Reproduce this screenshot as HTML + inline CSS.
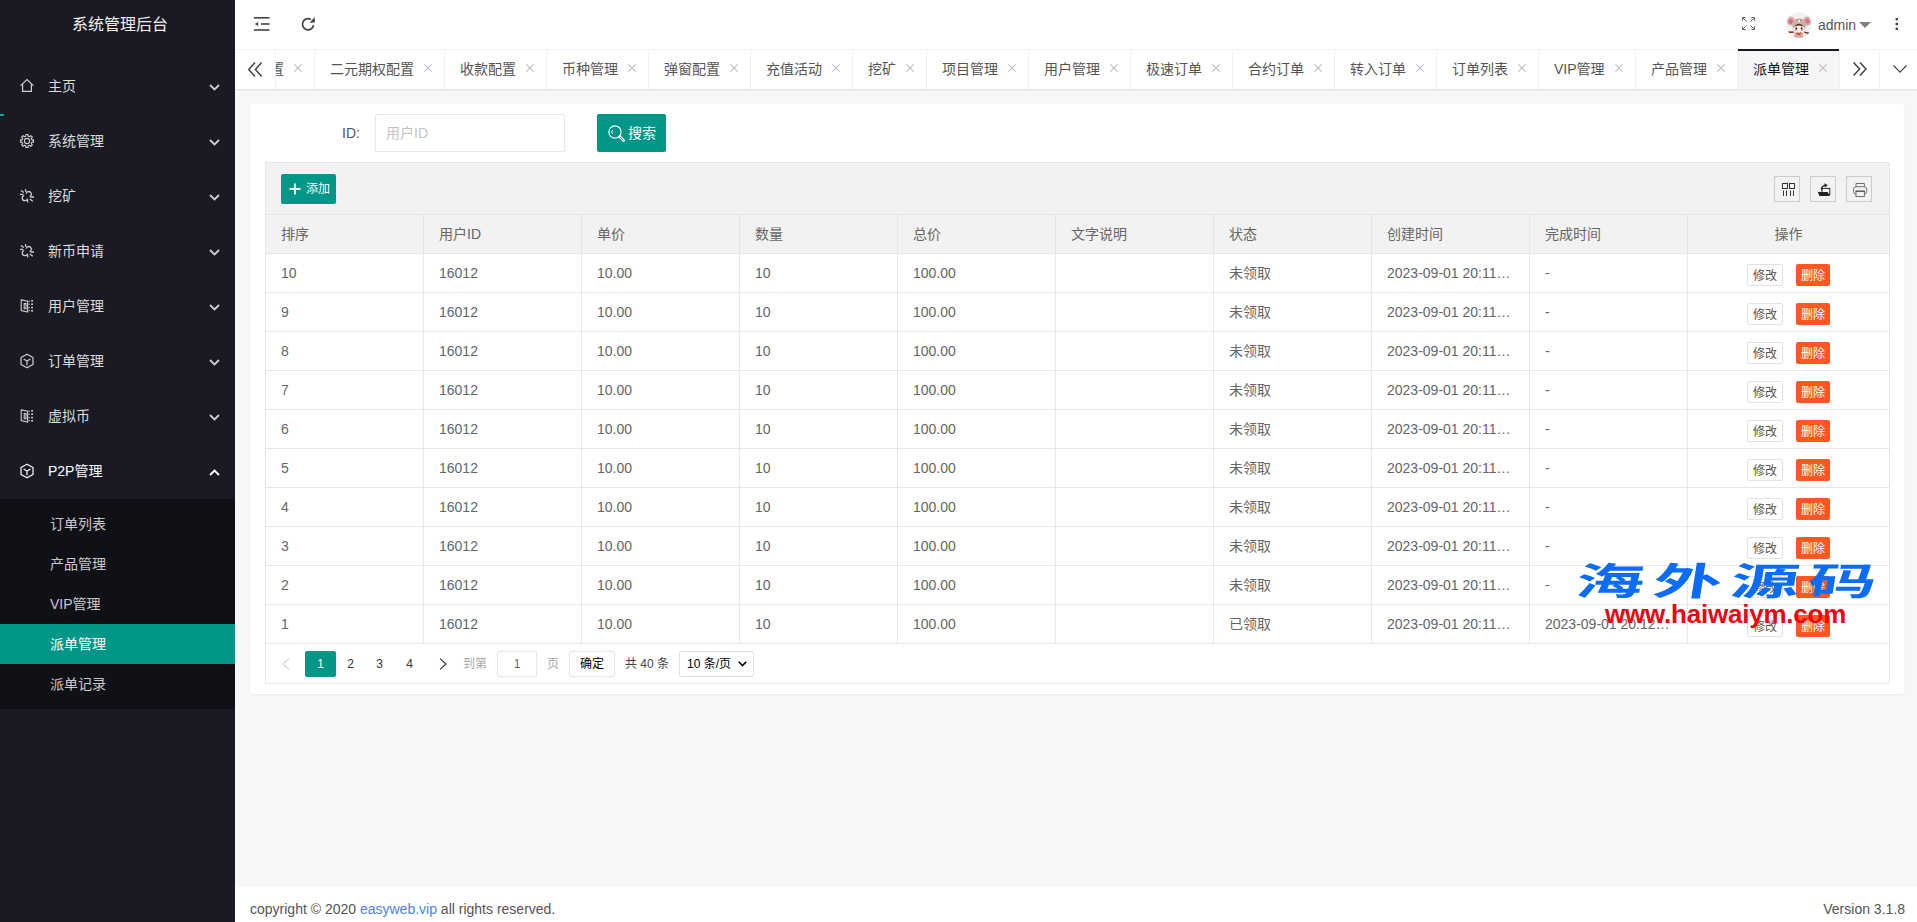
<!DOCTYPE html>
<html lang="zh-CN">
<head>
<meta charset="utf-8">
<title>系统管理后台</title>
<style>
*{box-sizing:border-box;margin:0;padding:0}
html,body{width:1917px;height:922px;overflow:hidden}
body{font-family:"Liberation Sans","Noto Sans CJK SC",sans-serif;font-size:14px;color:#666;background:#f5f7f9;position:relative}
svg{display:block;overflow:visible}
.abs{position:absolute}
/* sidebar */
#side{position:absolute;left:0;top:0;width:235px;height:922px;background:#191a23;color:#fff}
#logo{position:absolute;left:0;top:0;width:235px;height:50px;line-height:49px;text-align:center;font-size:16px;color:#f2f2f2;padding-left:5px}
.nav{position:absolute;left:0;width:235px;height:55px;line-height:55px;color:#dcdcde;font-size:14px}
.nav .ic{position:absolute;left:20px;top:20px;width:14px;height:14px}
.nav .tx{position:absolute;left:48px;top:0}
.nav .ar{position:absolute;left:209px;top:24.5px;width:11px;height:7px}
.nav.open{color:#fff}
#bar{position:absolute;left:0;top:114px;width:4px;height:2px;background:#00a896}
#sub{position:absolute;left:0;top:499px;width:235px;height:210px;background:#101117}
.sn{position:absolute;left:0;width:235px;height:40px;line-height:40px;padding-left:50px;color:#c9c9cc;font-size:14px}
.sn.on{background:#009688;color:#fff}
/* header */
#hd{position:absolute;left:235px;top:0;width:1682px;height:50px;background:#fff;border-bottom:1px solid #f2f2f2}
#tabs{position:absolute;left:235px;top:50px;width:1682px;height:39px;background:#fff;box-shadow:0 1px 2px rgba(0,0,0,.10)}
#tabrow{position:absolute;left:41px;top:0;height:39px;width:1564px;overflow:hidden;white-space:nowrap;display:flex}
.tab{position:relative;flex:none;height:39px;line-height:38px;border-right:1px solid #f0f0f0;color:#555;font-size:14px;padding-left:15px;white-space:nowrap;overflow:hidden}
.tab .x{position:absolute;right:12px;top:14px;width:8px;height:8px}
.tab.on{background:#f6f6f6;color:#111}
#actbar{position:absolute;left:1738px;top:49px;width:101px;height:2px;background:#191a23}
.ctl{position:absolute;top:0;height:39px;background:#fff}
/* card */
#card{position:absolute;left:250px;top:104px;width:1654px;height:590px;background:#fff;border-radius:2px;box-shadow:0 1px 2px rgba(0,0,0,.05)}
#foot{position:absolute;left:235px;top:887px;width:1682px;height:35px;background:#fff;line-height:44px;color:#555;font-size:14px}
/* form */
#lbl{position:absolute;left:342px;top:114px;line-height:38px;color:#555;font-size:14px}
#inp{position:absolute;left:375px;top:114px;width:190px;height:38px;border:1px solid #e6e6e6;border-radius:2px;background:#fff;line-height:36px;padding-left:10px;color:#c4c4c4;font-size:14px}
#sbtn{position:absolute;left:597px;top:114px;width:69px;height:38px;background:#009688;border-radius:2px;color:#fff;font-size:14px;line-height:38px}
/* table */
#tool{position:absolute;left:265px;top:162px;width:1625px;height:53px;background:#f2f2f2;border:1px solid #e6e6e6}
#add{position:absolute;left:281px;top:174px;width:55px;height:30px;background:#009688;border-radius:2px;color:#fff;font-size:12px;line-height:30px}
.tb{position:absolute;top:176px;width:26px;height:26px;border:1px solid #ccc;background:#f2f2f2}
#thead{position:absolute;left:265px;top:214px;width:1625px;height:40px;background:#f2f2f2;border:1px solid #e6e6e6}
#tbody{position:absolute;left:265px;top:254px;width:1625px;height:430px;border:1px solid #e6e6e6;border-top:none;background:#fff}
.vl{position:absolute;top:214px;width:1px;height:430px;background:#e6e6e6}
.hl{position:absolute;left:266px;width:1623px;height:1px;background:#e6e6e6}
.c{position:absolute;height:38px;line-height:38px;font-size:14px;color:#666;white-space:nowrap}
.b1{position:absolute;left:1747px;width:36px;height:22px;line-height:22px;border:1px solid #e2e2e2;border-radius:2px;background:#fff;color:#555;font-size:12px;text-align:center}
.b2{position:absolute;left:1796px;width:34px;height:22px;line-height:24px;border-radius:2px;background:#ff5722;color:#fff;font-size:12px;text-align:center}
/* pager */
.pg{position:absolute;top:651px;height:26px;line-height:26px;font-size:12px;color:#333}
#wm1{position:absolute;left:1573px;top:556px;color:#0b6cf6;font-family:"Noto Sans CJK SC",sans-serif;font-weight:700;font-size:38px;line-height:46px;white-space:nowrap;letter-spacing:5px;transform-origin:0 100%;transform:scaleX(1.8) skewX(-5deg)}
#wm2{position:absolute;left:1605px;top:594px;color:#f5000f;font-family:"Liberation Sans",sans-serif;font-weight:bold;font-size:26px;line-height:40px;white-space:nowrap;letter-spacing:-0.22px}
</style>
</head>
<body>
<div id="side">
<div id="logo">系统管理后台</div>
<div class="nav" style="top:59px"><svg class="ic" viewBox="0 0 14 14"><path d="M0.6 6.6 L7 0.6 L13.4 6.6 M2.6 5.6 V12.4 H11.4 V5.6" fill="none" stroke="#cfcfd2" stroke-width="1.2" stroke-linejoin="miter"/></svg><span class="tx">主页</span><svg class="ar" viewBox="0 0 11 7"><path d="M1 1 L5.5 5.4 L10 1" fill="none" stroke="#cfcfd2" stroke-width="1.8"/></svg></div>
<div class="nav" style="top:114px"><svg class="ic" viewBox="0 0 14 14"><path d="M5.87 0.50 L8.13 0.50 L8.17 2.14 L9.61 2.74 L10.80 1.60 L12.40 3.20 L11.26 4.39 L11.86 5.83 L13.50 5.87 L13.50 8.13 L11.86 8.17 L11.26 9.61 L12.40 10.80 L10.80 12.40 L9.61 11.26 L8.17 11.86 L8.13 13.50 L5.87 13.50 L5.83 11.86 L4.39 11.26 L3.20 12.40 L1.60 10.80 L2.74 9.61 L2.14 8.17 L0.50 8.13 L0.50 5.87 L2.14 5.83 L2.74 4.39 L1.60 3.20 L3.20 1.60 L4.39 2.74 L5.83 2.14Z" fill="none" stroke="#cfcfd2" stroke-width="1.1" stroke-linejoin="round"/><circle cx="7" cy="7" r="2.6" fill="none" stroke="#cfcfd2" stroke-width="1.1"/></svg><span class="tx">系统管理</span><svg class="ar" viewBox="0 0 11 7"><path d="M1 1 L5.5 5.4 L10 1" fill="none" stroke="#cfcfd2" stroke-width="1.8"/></svg></div>
<div class="nav" style="top:169px"><svg class="ic" viewBox="0 0 14 14"><g fill="none" stroke="#cfcfd2" stroke-width="1.3" stroke-linecap="butt"><path d="M6.2 4.6 A2.6 2.6 0 1 1 9.6 7.6"/><path d="M7.6 9.6 A2.7 2.7 0 1 1 4.2 6.4"/><path d="M1 1.4 L3.8 3.6 M5.4 0.2 L5.9 3 M0 5.4 H3.2 M10.4 8 H14 M7.4 10.6 L7.8 13.4 M9.8 10 L12.8 12.2"/></g></svg><span class="tx">挖矿</span><svg class="ar" viewBox="0 0 11 7"><path d="M1 1 L5.5 5.4 L10 1" fill="none" stroke="#cfcfd2" stroke-width="1.8"/></svg></div>
<div class="nav" style="top:224px"><svg class="ic" viewBox="0 0 14 14"><g fill="none" stroke="#cfcfd2" stroke-width="1.3" stroke-linecap="butt"><path d="M6.2 4.6 A2.6 2.6 0 1 1 9.6 7.6"/><path d="M7.6 9.6 A2.7 2.7 0 1 1 4.2 6.4"/><path d="M1 1.4 L3.8 3.6 M5.4 0.2 L5.9 3 M0 5.4 H3.2 M10.4 8 H14 M7.4 10.6 L7.8 13.4 M9.8 10 L12.8 12.2"/></g></svg><span class="tx">新币申请</span><svg class="ar" viewBox="0 0 11 7"><path d="M1 1 L5.5 5.4 L10 1" fill="none" stroke="#cfcfd2" stroke-width="1.8"/></svg></div>
<div class="nav" style="top:279px"><svg class="ic" viewBox="0 0 14 14"><g fill="none" stroke="#cfcfd2" stroke-width="1.1"><path d="M1.2 0.9 L7.6 2.3 V13 L1.2 11.6 Z"/><path d="M4.2 4.6 H6 V9.8 H4.2 Z"/></g><g fill="#cfcfd2"><rect x="8.6" y="1.6" width="1.2" height="1.2"/><rect x="11.2" y="1" width="1.8" height="1.6"/><rect x="8.6" y="4.6" width="1.2" height="1.2"/><rect x="11.2" y="4.4" width="1.8" height="1.6"/><rect x="8.6" y="8" width="1.2" height="1.2"/><rect x="11.2" y="7.8" width="1.8" height="1.6"/><rect x="8.6" y="11" width="1.2" height="1.2"/><rect x="11.2" y="11" width="1.8" height="1.6"/></g></svg><span class="tx">用户管理</span><svg class="ar" viewBox="0 0 11 7"><path d="M1 1 L5.5 5.4 L10 1" fill="none" stroke="#cfcfd2" stroke-width="1.8"/></svg></div>
<div class="nav" style="top:334px"><svg class="ic" viewBox="0 0 14 14"><path d="M7 0.2 L13 3.6 V10.4 L7 13.8 L1 10.4 V3.6 Z M3.6 5 L7 7 L10.4 5 M7 7 V11.2" fill="none" stroke="#cfcfd2" stroke-width="1.2" stroke-linejoin="round"/></svg><span class="tx">订单管理</span><svg class="ar" viewBox="0 0 11 7"><path d="M1 1 L5.5 5.4 L10 1" fill="none" stroke="#cfcfd2" stroke-width="1.8"/></svg></div>
<div class="nav" style="top:389px"><svg class="ic" viewBox="0 0 14 14"><g fill="none" stroke="#cfcfd2" stroke-width="1.1"><path d="M1.2 0.9 L7.6 2.3 V13 L1.2 11.6 Z"/><path d="M4.2 4.6 H6 V9.8 H4.2 Z"/></g><g fill="#cfcfd2"><rect x="8.6" y="1.6" width="1.2" height="1.2"/><rect x="11.2" y="1" width="1.8" height="1.6"/><rect x="8.6" y="4.6" width="1.2" height="1.2"/><rect x="11.2" y="4.4" width="1.8" height="1.6"/><rect x="8.6" y="8" width="1.2" height="1.2"/><rect x="11.2" y="7.8" width="1.8" height="1.6"/><rect x="8.6" y="11" width="1.2" height="1.2"/><rect x="11.2" y="11" width="1.8" height="1.6"/></g></svg><span class="tx">虚拟币</span><svg class="ar" viewBox="0 0 11 7"><path d="M1 1 L5.5 5.4 L10 1" fill="none" stroke="#cfcfd2" stroke-width="1.8"/></svg></div>
<div class="nav open" style="top:444px"><svg class="ic" viewBox="0 0 14 14"><path d="M7 0.2 L13 3.6 V10.4 L7 13.8 L1 10.4 V3.6 Z M3.6 5 L7 7 L10.4 5 M7 7 V11.2" fill="none" stroke="#ffffff" stroke-width="1.2" stroke-linejoin="round"/></svg><span class="tx">P2P管理</span><svg class="ar" viewBox="0 0 11 7"><path d="M1 6 L5.5 1.6 L10 6" fill="none" stroke="#ffffff" stroke-width="1.8"/></svg></div>
<div id="bar"></div>
<div id="sub">
<div class="sn" style="top:5px">订单列表</div>
<div class="sn" style="top:45px">产品管理</div>
<div class="sn" style="top:85px">VIP管理</div>
<div class="sn on" style="top:125px">派单管理</div>
<div class="sn" style="top:165px">派单记录</div>
</div>
</div>
<div id="hd">
<svg class="abs" style="left:19px;top:17px;width:16px;height:14px" viewBox="0 0 16 14"><g fill="#444"><rect x="0" y="0" width="15.5" height="1.6"/><rect x="7" y="6.2" width="8.5" height="1.6"/><rect x="0" y="12.2" width="15.5" height="1.6"/><path d="M0.8 7 L4.2 5 V9 Z"/></g></svg>
<svg class="abs" style="left:66px;top:17px;width:15px;height:15px" viewBox="0 0 15 15"><path d="M12.6 8.2 A5.6 5.6 0 1 1 9.9 2.4" fill="none" stroke="#444" stroke-width="1.7"/><path d="M8.6 5.9 L14 5.2 L13.6 0 Z" fill="#444"/></svg>
<svg class="abs" style="left:1507px;top:17px;width:13px;height:13px" viewBox="0 0 13 13"><g fill="none" stroke="#667" stroke-width="1"><path d="M0.5 3.6 V0.5 H3.6 M0.8 0.8 L4.6 4.6"/><path d="M12.5 3.6 V0.5 H9.4 M12.2 0.8 L8.4 4.6"/><path d="M0.5 9.4 V12.5 H3.6 M0.8 12.2 L4.6 8.4"/><path d="M12.5 9.4 V12.5 H9.4 M12.2 12.2 L8.4 8.4"/></g></svg>
<svg class="abs" style="left:1551px;top:12px;width:26px;height:26px" viewBox="0 0 26 26"><defs><clipPath id="av"><circle cx="13" cy="13" r="13"/></clipPath></defs><g clip-path="url(#av)"><rect width="26" height="26" fill="#f4f2f1"/><ellipse cx="5" cy="9.2" rx="4.1" ry="4.6" fill="#cfb3a7"/><ellipse cx="21" cy="9.2" rx="4.1" ry="4.6" fill="#cfb3a7"/><ellipse cx="4.9" cy="9.5" rx="2" ry="2.4" fill="#f2608a" transform="rotate(35 4.9 9.5)"/><ellipse cx="21.1" cy="9.2" rx="2" ry="2.4" fill="#f2608a" transform="rotate(-35 21.1 9.2)"/><ellipse cx="13.2" cy="12.8" rx="7.2" ry="6.6" fill="#cdb1a5"/><ellipse cx="13" cy="9" rx="1.7" ry="1" fill="#fdf6f3"/><circle cx="11.5" cy="8.4" r="0.5" fill="#4a3028"/><circle cx="14.5" cy="8.4" r="0.5" fill="#4a3028"/><path d="M7.8 14.2 Q13 9.6 18.2 14.2 L18 19 Q13 21 8 19 Z" fill="#fcefe9"/><path d="M7.3 15.2 Q13 8.4 18.7 15.2 Q13 11.8 7.3 15.2 Z" fill="#553328"/><ellipse cx="10.3" cy="16.5" rx="0.85" ry="1.35" fill="#3d1a14"/><ellipse cx="15.7" cy="16.5" rx="0.85" ry="1.35" fill="#3d1a14"/><ellipse cx="9.3" cy="18.2" rx="1.3" ry="0.8" fill="#f6a590"/><ellipse cx="16" cy="18.3" rx="1.3" ry="0.8" fill="#f6a590"/><path d="M8.2 20.4 H17.2 L17.2 26 H13.4 L13 24.6 L12.6 26 H8.2 Z" fill="#cbaea1"/><path d="M7.8 19.4 L2.4 19.2 L3 21 L7.6 21 Z" fill="#6a4234"/><path d="M18.2 19.4 L23 20.4 L22.2 22 L18.2 21 Z" fill="#6a4234"/><circle cx="3.5" cy="20.4" r="0.7" fill="#d83a2a"/><circle cx="21.7" cy="21.2" r="0.7" fill="#d83a2a"/><path d="M10.5 20 L12.8 21.2 L15 20 L14.6 22.6 L12.8 23.2 L11 22.6 Z" fill="#ea3a20"/></g></svg>
<span class="abs" style="left:1583px;top:0;line-height:50px;font-size:14px;color:#555">admin</span>
<svg class="abs" style="left:1624px;top:22px;width:12px;height:6px" viewBox="0 0 12 6"><path d="M0 0 H12 L6 6 Z" fill="#808080"/></svg>
<svg class="abs" style="left:1660px;top:18px;width:4px;height:12px" viewBox="0 0 4 12"><g fill="#444"><rect x="0.6" y="0" width="2.4" height="2.4"/><rect x="0.6" y="4.8" width="2.4" height="2.4"/><rect x="0.6" y="9.6" width="2.4" height="2.4"/></g></svg>
</div>
<div id="tabs">
<div id="tabrow">
<div class="tab" style="width:39px;padding-left:0"><span class="abs" style="right:30px;top:0">弹窗设置</span><svg class="x" viewBox="0 0 8 8"><path d="M0.4 0.4 L7.6 7.6 M7.6 0.4 L0.4 7.6" stroke="#bcbfc6" stroke-width="1.15" fill="none"/></svg></div>
<div class="tab" style="width:130px">二元期权配置<svg class="x" viewBox="0 0 8 8"><path d="M0.4 0.4 L7.6 7.6 M7.6 0.4 L0.4 7.6" stroke="#bcbfc6" stroke-width="1.15" fill="none"/></svg></div>
<div class="tab" style="width:102px">收款配置<svg class="x" viewBox="0 0 8 8"><path d="M0.4 0.4 L7.6 7.6 M7.6 0.4 L0.4 7.6" stroke="#bcbfc6" stroke-width="1.15" fill="none"/></svg></div>
<div class="tab" style="width:102px">币种管理<svg class="x" viewBox="0 0 8 8"><path d="M0.4 0.4 L7.6 7.6 M7.6 0.4 L0.4 7.6" stroke="#bcbfc6" stroke-width="1.15" fill="none"/></svg></div>
<div class="tab" style="width:102px">弹窗配置<svg class="x" viewBox="0 0 8 8"><path d="M0.4 0.4 L7.6 7.6 M7.6 0.4 L0.4 7.6" stroke="#bcbfc6" stroke-width="1.15" fill="none"/></svg></div>
<div class="tab" style="width:102px">充值活动<svg class="x" viewBox="0 0 8 8"><path d="M0.4 0.4 L7.6 7.6 M7.6 0.4 L0.4 7.6" stroke="#bcbfc6" stroke-width="1.15" fill="none"/></svg></div>
<div class="tab" style="width:74px">挖矿<svg class="x" viewBox="0 0 8 8"><path d="M0.4 0.4 L7.6 7.6 M7.6 0.4 L0.4 7.6" stroke="#bcbfc6" stroke-width="1.15" fill="none"/></svg></div>
<div class="tab" style="width:102px">项目管理<svg class="x" viewBox="0 0 8 8"><path d="M0.4 0.4 L7.6 7.6 M7.6 0.4 L0.4 7.6" stroke="#bcbfc6" stroke-width="1.15" fill="none"/></svg></div>
<div class="tab" style="width:102px">用户管理<svg class="x" viewBox="0 0 8 8"><path d="M0.4 0.4 L7.6 7.6 M7.6 0.4 L0.4 7.6" stroke="#bcbfc6" stroke-width="1.15" fill="none"/></svg></div>
<div class="tab" style="width:102px">极速订单<svg class="x" viewBox="0 0 8 8"><path d="M0.4 0.4 L7.6 7.6 M7.6 0.4 L0.4 7.6" stroke="#bcbfc6" stroke-width="1.15" fill="none"/></svg></div>
<div class="tab" style="width:102px">合约订单<svg class="x" viewBox="0 0 8 8"><path d="M0.4 0.4 L7.6 7.6 M7.6 0.4 L0.4 7.6" stroke="#bcbfc6" stroke-width="1.15" fill="none"/></svg></div>
<div class="tab" style="width:102px">转入订单<svg class="x" viewBox="0 0 8 8"><path d="M0.4 0.4 L7.6 7.6 M7.6 0.4 L0.4 7.6" stroke="#bcbfc6" stroke-width="1.15" fill="none"/></svg></div>
<div class="tab" style="width:102px">订单列表<svg class="x" viewBox="0 0 8 8"><path d="M0.4 0.4 L7.6 7.6 M7.6 0.4 L0.4 7.6" stroke="#bcbfc6" stroke-width="1.15" fill="none"/></svg></div>
<div class="tab" style="width:97px">VIP管理<svg class="x" viewBox="0 0 8 8"><path d="M0.4 0.4 L7.6 7.6 M7.6 0.4 L0.4 7.6" stroke="#bcbfc6" stroke-width="1.15" fill="none"/></svg></div>
<div class="tab" style="width:102px">产品管理<svg class="x" viewBox="0 0 8 8"><path d="M0.4 0.4 L7.6 7.6 M7.6 0.4 L0.4 7.6" stroke="#bcbfc6" stroke-width="1.15" fill="none"/></svg></div>
<div class="tab on" style="width:102px">派单管理<svg class="x" viewBox="0 0 8 8"><path d="M0.4 0.4 L7.6 7.6 M7.6 0.4 L0.4 7.6" stroke="#bcbfc6" stroke-width="1.15" fill="none"/></svg></div>
</div>
<div class="ctl" style="left:0;width:41px;border-right:1px solid #f0f0f0"><svg class="abs" style="left:13px;top:12px;width:15px;height:15px" viewBox="0 0 15 15"><path d="M7 0.6 L0.8 7.5 L7 14.4 M13.6 0.6 L7.4 7.5 L13.6 14.4" fill="none" stroke="#444" stroke-width="1.5"/></svg></div>
<div class="ctl" style="left:1605px;width:40px;border-right:1px solid #f0f0f0"><svg class="abs" style="left:13px;top:12px;width:14px;height:14px" viewBox="0 0 14 15" preserveAspectRatio="none"><path d="M0.6 0.6 L6.6 7.5 L0.6 14.4 M7 0.6 L13 7.5 L7 14.4" fill="none" stroke="#444" stroke-width="1.5"/></svg></div>
<div class="ctl" style="left:1645px;width:37px"><svg class="abs" style="left:13px;top:15px;width:14px;height:8px" viewBox="0 0 14 8"><path d="M0.5 0.5 L7 7.2 L13.5 0.5" fill="none" stroke="#444" stroke-width="1.2"/></svg></div>
</div>
<div id="actbar"></div>
<div id="card"></div>
<div id="lbl">ID:</div>
<div id="inp">用户ID</div>
<div id="sbtn"><svg class="abs" style="left:11px;top:10.5px;width:17px;height:17px" viewBox="0 0 17 17"><circle cx="7" cy="7" r="6.1" fill="none" stroke="#fff" stroke-width="1.2"/><path d="M4.3 8.8 A3.2 3.2 0 0 1 4.6 5" fill="none" stroke="#fff" stroke-width="0.9"/><path d="M11.6 11.6 L15.6 15.4" stroke="#fff" stroke-width="2.8" stroke-linecap="round"/><path d="M12.2 12.2 L15.2 15" stroke="#009688" stroke-width="0.9" stroke-linecap="round"/></svg><span class="abs" style="left:31px;top:0">搜索</span></div>
<div id="tool"></div>
<div id="add"><svg class="abs" style="left:8px;top:9px;width:12px;height:12px" viewBox="0 0 12 12"><path d="M6 0.5 V11.5 M0.5 6 H11.5" stroke="#fff" stroke-width="1.8" fill="none"/></svg><span class="abs" style="left:25px;top:0">添加</span></div>
<div class="tb" style="left:1774px"><svg class="abs" style="left:7px;top:6px;width:13px;height:13px" viewBox="0 0 13 13"><g fill="none" stroke="#333" stroke-width="1"><rect x="0.5" y="0.5" width="5" height="5"/><rect x="7.5" y="0.5" width="5" height="5"/><path d="M1.5 7.5 V13 M4.5 7.5 V13 M8.5 7.5 V13 M11.5 7.5 V13"/></g></svg></div>
<div class="tb" style="left:1810px"><svg class="abs" style="left:7px;top:6px;width:13px;height:13px" viewBox="0 0 13 13"><rect x="4" y="5.4" width="7.8" height="6" fill="#fafafa" stroke="#222" stroke-width="1"/><path d="M-0.2 9 H9.6 L11.9 13 H1.5 Z" fill="#222"/><path d="M3.4 6.6 C3.6 4 5.2 2.6 7.2 2.4" fill="none" stroke="#222" stroke-width="1.3"/><path d="M6.4 0.2 L9.8 2.3 L6.8 4.4 Z" fill="#222"/></svg></div>
<div class="tb" style="left:1846px"><svg class="abs" style="left:6px;top:6px;width:14px;height:14px" viewBox="0 0 14 14"><g fill="none" stroke="#6e6e6e" stroke-width="1"><path d="M3 3.7 V0.5 H11.4 V3.7"/><rect x="0.5" y="3.7" width="13.2" height="7.4" rx="2.6"/><rect x="3" y="8.2" width="8.4" height="5.3" fill="#f2f2f2"/></g><path d="M2.6 8.2 H11.8" stroke="#444" stroke-width="1"/></svg></div>
<div id="thead"></div>
<div id="tbody"></div>
<div class="vl" style="left:423px"></div>
<div class="vl" style="left:581px"></div>
<div class="vl" style="left:739px"></div>
<div class="vl" style="left:897px"></div>
<div class="vl" style="left:1055px"></div>
<div class="vl" style="left:1213px"></div>
<div class="vl" style="left:1371px"></div>
<div class="vl" style="left:1529px"></div>
<div class="vl" style="left:1687px"></div>
<div class="hl" style="top:292px"></div>
<div class="hl" style="top:331px"></div>
<div class="hl" style="top:370px"></div>
<div class="hl" style="top:409px"></div>
<div class="hl" style="top:448px"></div>
<div class="hl" style="top:487px"></div>
<div class="hl" style="top:526px"></div>
<div class="hl" style="top:565px"></div>
<div class="hl" style="top:604px"></div>
<div class="hl" style="top:643px"></div>
<div class="c" style="left:281px;top:215px">排序</div>
<div class="c" style="left:439px;top:215px">用户ID</div>
<div class="c" style="left:597px;top:215px">单价</div>
<div class="c" style="left:755px;top:215px">数量</div>
<div class="c" style="left:913px;top:215px">总价</div>
<div class="c" style="left:1071px;top:215px">文字说明</div>
<div class="c" style="left:1229px;top:215px">状态</div>
<div class="c" style="left:1387px;top:215px">创建时间</div>
<div class="c" style="left:1545px;top:215px">完成时间</div>
<div class="c" style="left:1688px;top:215px;width:201px;text-align:center">操作</div>
<div class="c" style="left:281px;top:254px">10</div>
<div class="c" style="left:439px;top:254px">16012</div>
<div class="c" style="left:597px;top:254px">10.00</div>
<div class="c" style="left:755px;top:254px">10</div>
<div class="c" style="left:913px;top:254px">100.00</div>
<div class="c" style="left:1229px;top:254px">未领取</div>
<div class="c" style="left:1387px;top:254px">2023-09-01 20:11…</div>
<div class="c" style="left:1545px;top:254px">-</div>
<div class="b1" style="top:264px">修改</div><div class="b2" style="top:264px">删除</div>
<div class="c" style="left:281px;top:293px">9</div>
<div class="c" style="left:439px;top:293px">16012</div>
<div class="c" style="left:597px;top:293px">10.00</div>
<div class="c" style="left:755px;top:293px">10</div>
<div class="c" style="left:913px;top:293px">100.00</div>
<div class="c" style="left:1229px;top:293px">未领取</div>
<div class="c" style="left:1387px;top:293px">2023-09-01 20:11…</div>
<div class="c" style="left:1545px;top:293px">-</div>
<div class="b1" style="top:303px">修改</div><div class="b2" style="top:303px">删除</div>
<div class="c" style="left:281px;top:332px">8</div>
<div class="c" style="left:439px;top:332px">16012</div>
<div class="c" style="left:597px;top:332px">10.00</div>
<div class="c" style="left:755px;top:332px">10</div>
<div class="c" style="left:913px;top:332px">100.00</div>
<div class="c" style="left:1229px;top:332px">未领取</div>
<div class="c" style="left:1387px;top:332px">2023-09-01 20:11…</div>
<div class="c" style="left:1545px;top:332px">-</div>
<div class="b1" style="top:342px">修改</div><div class="b2" style="top:342px">删除</div>
<div class="c" style="left:281px;top:371px">7</div>
<div class="c" style="left:439px;top:371px">16012</div>
<div class="c" style="left:597px;top:371px">10.00</div>
<div class="c" style="left:755px;top:371px">10</div>
<div class="c" style="left:913px;top:371px">100.00</div>
<div class="c" style="left:1229px;top:371px">未领取</div>
<div class="c" style="left:1387px;top:371px">2023-09-01 20:11…</div>
<div class="c" style="left:1545px;top:371px">-</div>
<div class="b1" style="top:381px">修改</div><div class="b2" style="top:381px">删除</div>
<div class="c" style="left:281px;top:410px">6</div>
<div class="c" style="left:439px;top:410px">16012</div>
<div class="c" style="left:597px;top:410px">10.00</div>
<div class="c" style="left:755px;top:410px">10</div>
<div class="c" style="left:913px;top:410px">100.00</div>
<div class="c" style="left:1229px;top:410px">未领取</div>
<div class="c" style="left:1387px;top:410px">2023-09-01 20:11…</div>
<div class="c" style="left:1545px;top:410px">-</div>
<div class="b1" style="top:420px">修改</div><div class="b2" style="top:420px">删除</div>
<div class="c" style="left:281px;top:449px">5</div>
<div class="c" style="left:439px;top:449px">16012</div>
<div class="c" style="left:597px;top:449px">10.00</div>
<div class="c" style="left:755px;top:449px">10</div>
<div class="c" style="left:913px;top:449px">100.00</div>
<div class="c" style="left:1229px;top:449px">未领取</div>
<div class="c" style="left:1387px;top:449px">2023-09-01 20:11…</div>
<div class="c" style="left:1545px;top:449px">-</div>
<div class="b1" style="top:459px">修改</div><div class="b2" style="top:459px">删除</div>
<div class="c" style="left:281px;top:488px">4</div>
<div class="c" style="left:439px;top:488px">16012</div>
<div class="c" style="left:597px;top:488px">10.00</div>
<div class="c" style="left:755px;top:488px">10</div>
<div class="c" style="left:913px;top:488px">100.00</div>
<div class="c" style="left:1229px;top:488px">未领取</div>
<div class="c" style="left:1387px;top:488px">2023-09-01 20:11…</div>
<div class="c" style="left:1545px;top:488px">-</div>
<div class="b1" style="top:498px">修改</div><div class="b2" style="top:498px">删除</div>
<div class="c" style="left:281px;top:527px">3</div>
<div class="c" style="left:439px;top:527px">16012</div>
<div class="c" style="left:597px;top:527px">10.00</div>
<div class="c" style="left:755px;top:527px">10</div>
<div class="c" style="left:913px;top:527px">100.00</div>
<div class="c" style="left:1229px;top:527px">未领取</div>
<div class="c" style="left:1387px;top:527px">2023-09-01 20:11…</div>
<div class="c" style="left:1545px;top:527px">-</div>
<div class="b1" style="top:537px">修改</div><div class="b2" style="top:537px">删除</div>
<div class="c" style="left:281px;top:566px">2</div>
<div class="c" style="left:439px;top:566px">16012</div>
<div class="c" style="left:597px;top:566px">10.00</div>
<div class="c" style="left:755px;top:566px">10</div>
<div class="c" style="left:913px;top:566px">100.00</div>
<div class="c" style="left:1229px;top:566px">未领取</div>
<div class="c" style="left:1387px;top:566px">2023-09-01 20:11…</div>
<div class="c" style="left:1545px;top:566px">-</div>
<div class="b1" style="top:576px">修改</div><div class="b2" style="top:576px">删除</div>
<div class="c" style="left:281px;top:605px">1</div>
<div class="c" style="left:439px;top:605px">16012</div>
<div class="c" style="left:597px;top:605px">10.00</div>
<div class="c" style="left:755px;top:605px">10</div>
<div class="c" style="left:913px;top:605px">100.00</div>
<div class="c" style="left:1229px;top:605px">已领取</div>
<div class="c" style="left:1387px;top:605px">2023-09-01 20:11…</div>
<div class="c" style="left:1545px;top:605px">2023-09-01 20:12…</div>
<div class="b1" style="top:615px">修改</div><div class="b2" style="top:615px">删除</div>
<svg class="abs" style="left:282px;top:658px;width:8px;height:12px" viewBox="0 0 8 12"><path d="M7 0.6 L1 6 L7 11.4" fill="none" stroke="#d2d2d2" stroke-width="1.2"/></svg>
<div class="pg" style="left:305px;width:31px;background:#009688;border-radius:2px;color:#fff;text-align:center">1</div>
<div class="pg" style="left:335px;width:31px;text-align:center">2</div>
<div class="pg" style="left:364px;width:31px;text-align:center">3</div>
<div class="pg" style="left:394px;width:31px;text-align:center">4</div>
<svg class="abs" style="left:439px;top:658px;width:8px;height:12px" viewBox="0 0 8 12"><path d="M1 0.6 L7 6 L1 11.4" fill="none" stroke="#333" stroke-width="1.2"/></svg>
<div class="pg" style="left:463px;color:#a8a8a8">到第</div>
<div class="pg" style="left:497px;width:40px;border:1px solid #e6e6e6;border-radius:2px;text-align:center;line-height:24px;color:#666">1</div>
<div class="pg" style="left:547px;color:#a8a8a8">页</div>
<div class="pg" style="left:569px;width:46px;border:1px solid #e6e6e6;border-radius:2px;text-align:center;line-height:24px;color:#000">确定</div>
<div class="pg" style="left:625px;color:#444">共 40 条</div>
<div class="pg" style="left:679px;width:75px;border:1px solid #e0e0e0;border-radius:2px;line-height:24px;color:#000;padding-left:7px">10 条/页<svg class="abs" style="left:58px;top:9px;width:9px;height:6px" viewBox="0 0 9 6"><path d="M0.8 0.8 L4.5 4.6 L8.2 0.8" fill="none" stroke="#000" stroke-width="1.6"/></svg></div>
<div id="wm1">海外源码</div>
<div id="wm2">www.haiwaiym.com</div>
<div id="foot"><span class="abs" style="left:15px;top:0">copyright © 2020 <span style="color:#4a86e8">easyweb.vip</span> all rights reserved.</span><span class="abs" style="right:12px;top:0">Version 3.1.8</span></div>
</body>
</html>
